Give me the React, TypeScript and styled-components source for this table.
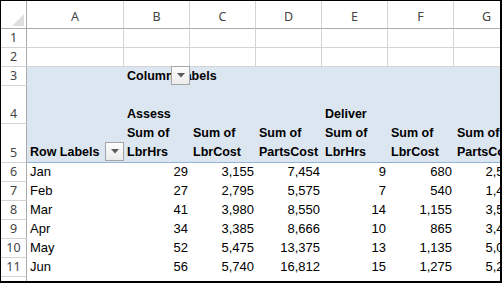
import React from "react";
import styled, { createGlobalStyle } from "styled-components";

const GlobalStyle = createGlobalStyle`
  html, body {
    margin: 0;
    padding: 0;
    background: #ffffff;
  }
`;

const COLS = ["A", "B", "C", "D", "E", "F", "G"];

const months = [
  { n: 6, label: "Jan", v: ["29", "3,155", "7,454", "9", "680", "2,550"] },
  { n: 7, label: "Feb", v: ["27", "2,795", "5,575", "7", "540", "1,475"] },
  { n: 8, label: "Mar", v: ["41", "3,980", "8,550", "14", "1,155", "3,540"] },
  { n: 9, label: "Apr", v: ["34", "3,385", "8,666", "10", "865", "3,410"] },
  { n: 10, label: "May", v: ["52", "5,475", "13,375", "13", "1,135", "5,025"] },
  { n: 11, label: "Jun", v: ["56", "5,740", "16,812", "15", "1,275", "5,210"] },
  { n: 12, label: "Jul", v: ["41", "4,700", "9,097", "11", "975", "4,120"] },
];

const headers = [
  { top: "Assess", bottom: "Sum of\nLbrHrs" },
  { top: "", bottom: "Sum of\nLbrCost" },
  { top: "", bottom: "Sum of\nPartsCost" },
  { top: "Deliver", bottom: "Sum of\nLbrHrs" },
  { top: "", bottom: "Sum of\nLbrCost" },
  { top: "", bottom: "Sum of\nPartsCost" },
];

const Frame = styled.div`
  width: 502px;
  height: 283px;
  box-sizing: border-box;
  border-top: 1px solid #000;
  border-left: 1px solid #000;
  border-right: 2px solid #000;
  border-bottom: 2px solid #000;
  overflow: hidden;
  background: #fff;
`;

const Sheet = styled.div`
  display: grid;
  grid-template-columns: 26px 97px repeat(6, 66px);
  grid-template-rows: 28px repeat(3, 19px) 38px 39px repeat(7, 19px);
  font-family: "Liberation Sans", Arial, sans-serif;
  color: #000;
`;

const Corner = styled.div`
  box-sizing: border-box;
  border-right: 1px solid #ababab;
  border-bottom: 1px solid #ababab;
  display: flex;
  align-items: flex-end;
  justify-content: flex-end;
  padding: 0 2px 2px 0;
`;

const ColHead = styled.div`
  box-sizing: border-box;
  border-right: 1px solid #d4d4d4;
  border-bottom: 1px solid #ababab;
  display: flex;
  align-items: flex-end;
  justify-content: center;
  padding-bottom: 3px;
  font-family: "Noto Sans", "DejaVu Sans", sans-serif;
  font-size: 12.5px;
  line-height: 16px;
  color: #444;
`;

const RowHead = styled.div`
  box-sizing: border-box;
  border-right: 1px solid #ababab;
  border-bottom: 1px solid #d4d4d4;
  display: flex;
  align-items: flex-end;
  justify-content: center;
  padding-bottom: 1px;
  font-family: "Noto Sans", "DejaVu Sans", sans-serif;
  font-size: 12.5px;
  line-height: 17px;
  color: #444;
`;

const Cell = styled.div<{
  $kind: "grid" | "pivot" | "head" | "data";
  $right?: boolean;
  $bold?: boolean;
  $nowrap?: boolean;
}>`
  box-sizing: border-box;
  position: ${(p) => (p.$nowrap ? "relative" : "static")};
  z-index: ${(p) => (p.$nowrap ? 1 : "auto")};
  display: flex;
  align-items: flex-end;
  justify-content: ${(p) => (p.$right ? "flex-end" : "flex-start")};
  padding: 0 2px ${(p) => (p.$kind === "data" ? "1px" : "0")} 3px;
  background: ${(p) =>
    p.$kind === "pivot" || p.$kind === "head" ? "#dce6f1" : "#ffffff"};
  border-right: ${(p) => (p.$kind === "grid" ? "1px solid #d4d4d4" : "none")};
  border-bottom: ${(p) =>
    p.$kind === "grid"
      ? "1px solid #d4d4d4"
      : p.$kind === "head"
      ? "1px solid #95b3d7"
      : "none"};
  font-size: ${(p) => (p.$bold ? "12.5px" : "13px")};
  font-weight: ${(p) => (p.$bold ? 700 : 400)};
  line-height: 19px;
  white-space: ${(p) => (p.$nowrap ? "nowrap" : "pre-line")};
  overflow: ${(p) => (p.$nowrap ? "visible" : "hidden")};
`;

const Dropdown = styled.span`
  position: absolute;
  right: 0;
  bottom: 1px;
  width: 19px;
  height: 19px;
  box-sizing: border-box;
  border: 1px solid #a5a5a5;
  background: linear-gradient(#fdfdfd, #ececec);
  display: flex;
  align-items: center;
  justify-content: center;
`;

const Arrow = () => (
  <svg width="8" height="5" viewBox="0 0 8 5">
    <polygon points="0,0 8,0 4,4.5" fill="#5a5a5a" />
  </svg>
);

const CornerMark = () => (
  <svg width="12" height="12" viewBox="0 0 12 12">
    <polygon points="12,0 12,12 0,12" fill="#dfdfdf" />
  </svg>
);

export default function App() {
  return (
    <>
      <GlobalStyle />
      <Frame>
        <Sheet>
          <Corner>
            <CornerMark />
          </Corner>
          {COLS.map((c) => (
            <ColHead key={c}>{c}</ColHead>
          ))}

          {[1, 2].map((r) => (
            <React.Fragment key={r}>
              <RowHead>{r}</RowHead>
              {COLS.map((c) => (
                <Cell key={c} $kind="grid" />
              ))}
            </React.Fragment>
          ))}

          <RowHead>3</RowHead>
          <Cell $kind="pivot" />
          <Cell $kind="pivot" $bold $nowrap>
            Column Labels
            <Dropdown>
              <Arrow />
            </Dropdown>
          </Cell>
          {COLS.slice(2).map((c) => (
            <Cell key={c} $kind="pivot" />
          ))}

          <RowHead>4</RowHead>
          <Cell $kind="pivot" />
          {headers.map((h, i) => (
            <Cell key={i} $kind="pivot" $bold>
              {h.top}
            </Cell>
          ))}

          <RowHead>5</RowHead>
          <Cell $kind="head" $bold $nowrap>
            Row Labels
            <Dropdown>
              <Arrow />
            </Dropdown>
          </Cell>
          {headers.map((h, i) => (
            <Cell key={i} $kind="head" $bold>
              {h.bottom}
            </Cell>
          ))}

          {months.map((m) => (
            <React.Fragment key={m.n}>
              <RowHead>{m.n}</RowHead>
              <Cell $kind="data">{m.label}</Cell>
              {m.v.map((v, i) => (
                <Cell key={i} $kind="data" $right>
                  {v}
                </Cell>
              ))}
            </React.Fragment>
          ))}
        </Sheet>
      </Frame>
    </>
  );
}
